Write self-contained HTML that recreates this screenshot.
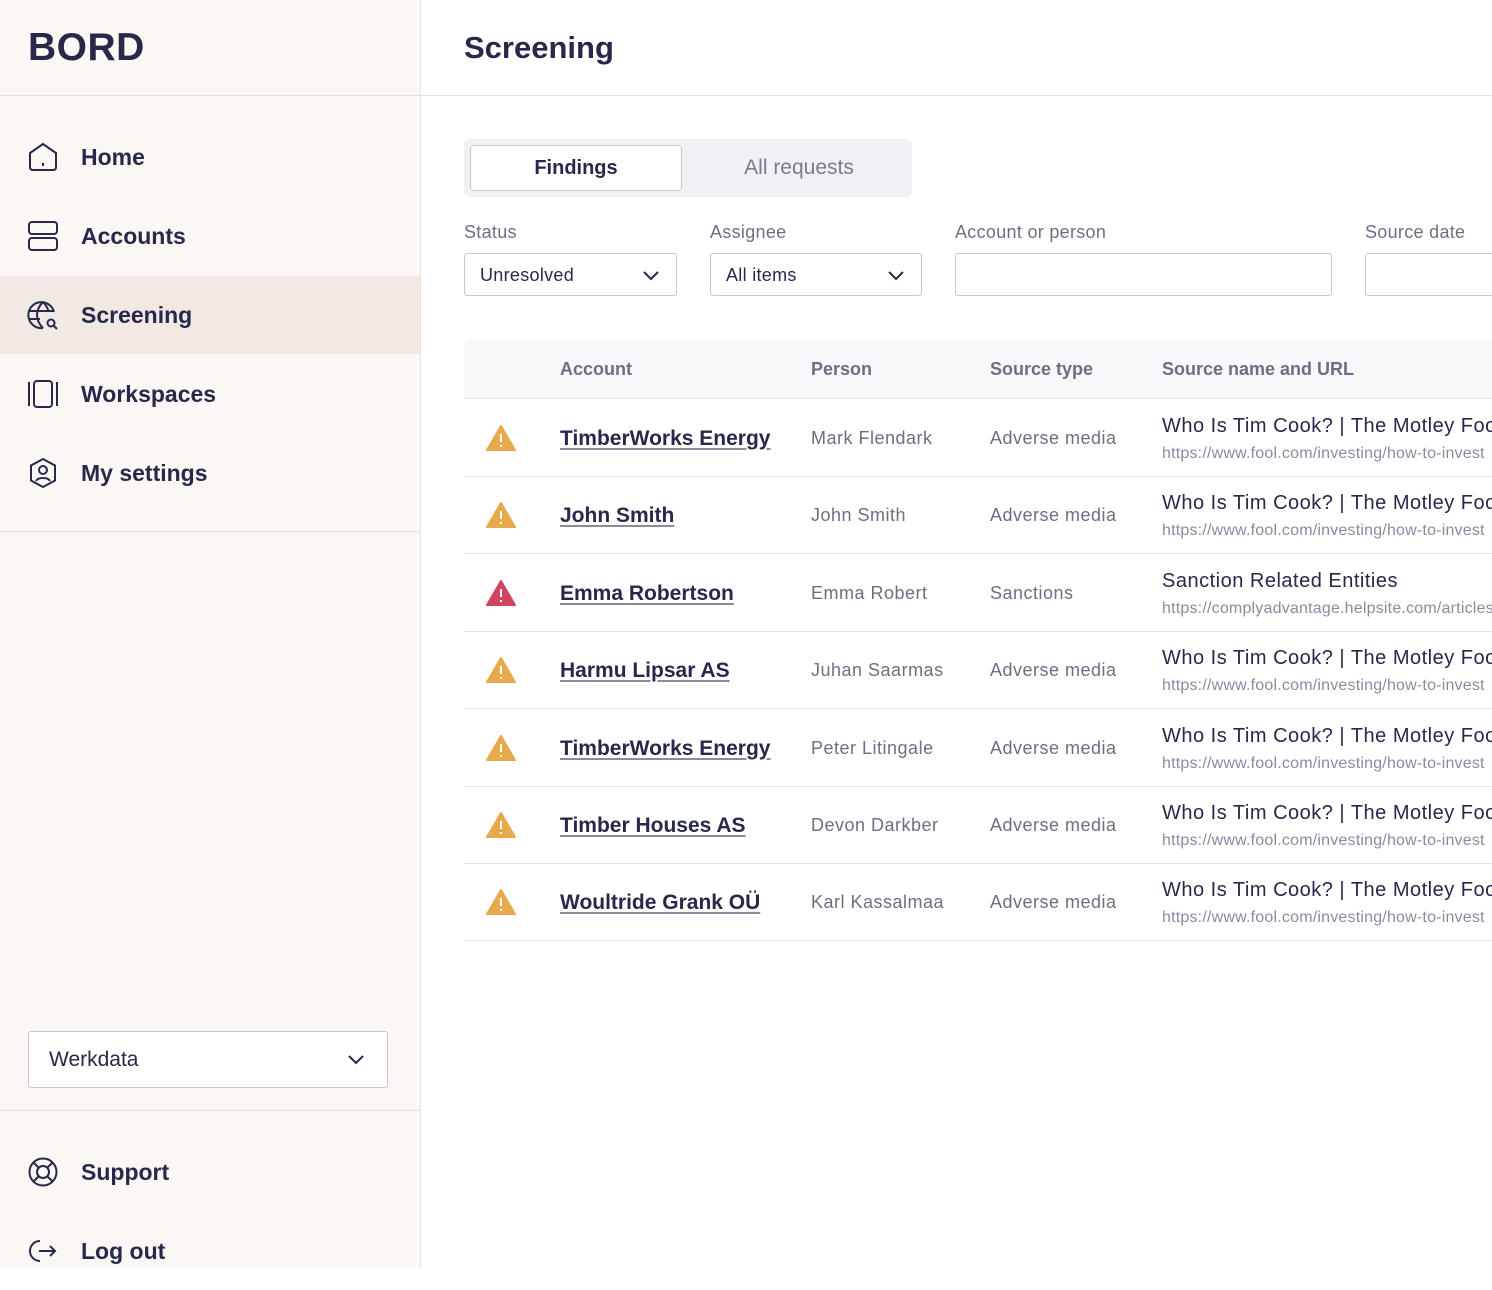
<!DOCTYPE html>
<html><head><meta charset="utf-8"><style>
*{margin:0;padding:0;box-sizing:border-box}
body{width:1492px;height:1268px;overflow:hidden;font-family:"Liberation Sans",sans-serif;color:#27284a;background:#fff;position:relative}
.sb{position:absolute;left:0;top:0;width:421px;height:1268px;background:#faf7f5;border-right:1px solid #e6e2e0}
.logo{position:absolute;left:28px;top:26px;font-size:39px;font-weight:bold;letter-spacing:0.5px}
.hl{position:absolute;left:0;width:420px;height:1px;background:#e6e2e0}
.nav{position:absolute;left:0;width:420px;height:78px;display:flex;align-items:center;font-size:23px;font-weight:bold}
.nav svg{position:absolute;left:27px}
.nav span{position:absolute;left:81px}
.act{background:#f1e9e4}
.sel{position:absolute;left:28px;top:1031px;width:360px;height:57px;border:1px solid #c9c7cf;border-radius:3px;background:#fff;font-size:21px;padding:16px 20px}
h1{position:absolute;left:464px;top:30px;font-size:31px;font-weight:bold}
.tabs{position:absolute;left:464px;top:139px;width:448px;height:58px;background:#f1f1f5;border-radius:6px}
.tab1{position:absolute;left:6px;top:6px;width:212px;height:46px;background:#fff;border:1px solid #c9c7cf;border-radius:4px;text-align:center;line-height:44px;font-size:20px;font-weight:bold}
.tab2{position:absolute;left:240px;top:6px;width:190px;line-height:46px;text-align:center;font-size:21px;color:#7a7a90}
.lbl{position:absolute;top:222px;font-size:18px;color:#6e6e82;letter-spacing:.3px}
.inp{position:absolute;top:253px;height:43px;border:1px solid #c9c7cf;border-radius:3px;background:#fff;font-size:18px;padding:11px 15px;letter-spacing:.3px}
.th{position:absolute;left:464px;top:340px;width:1028px;height:59px;background:#f8f8fa;border-bottom:1px solid #e3e3e8;border-radius:6px 0 0 0}
.th span{position:absolute;top:19px;font-size:18px;font-weight:bold;color:#6e6e82}
.row{position:absolute;left:464px;width:1028px;height:78px;border-bottom:1px solid #e3e3e8}
.row svg{position:absolute;left:22px;top:26px}
.acc{position:absolute;left:96px;top:28px;font-size:21px;font-weight:bold;text-decoration:underline;text-decoration-color:#8a8aa0;text-underline-offset:3px;white-space:nowrap}
.per{position:absolute;left:347px;top:29px;font-size:18px;color:#6e6e82;letter-spacing:.5px}
.st{position:absolute;left:526px;top:29px;font-size:18px;color:#6e6e82;letter-spacing:.5px}
.sn{position:absolute;left:698px;top:16px;font-size:20px;white-space:nowrap;letter-spacing:.5px}
.su{position:absolute;left:698px;top:46px;font-size:16px;color:#8a8aa0;white-space:nowrap;letter-spacing:.2px}
</style></head><body>
<div class="sb">
<div class="logo">BORD</div>
<div class="hl" style="top:95px"></div>
<div class="nav" style="top:118px"><svg width="32" height="32" viewBox="0 0 32 32" fill="none" stroke="#27284a" stroke-width="2"><path d="M3 12 L16 3 L29 12 V26 Q29 29 26 29 H6 Q3 29 3 26Z"/><path d="M16 22v3"/></svg><span>Home</span></div>
<div class="nav" style="top:197px"><svg width="32" height="32" viewBox="0 0 32 32" fill="none" stroke="#27284a" stroke-width="2"><rect x="2" y="2" width="28" height="12" rx="3"/><rect x="2" y="18" width="28" height="12" rx="3"/></svg><span>Accounts</span></div>
<div class="nav act" style="top:276px"><svg width="32" height="32" viewBox="0 0 32 32" fill="none" stroke="#27284a" stroke-width="2"><path d="M27 13A13 13 0 1 0 16 29"/><path d="M16 3c-4 4-6 8-6 13s2 9 6 13M16 3c3 3 5 6 5.5 10"/><path d="M3 12h24M3 20h10"/><circle cx="24" cy="24" r="3.5"/><path d="M26.5 26.5L30 30"/></svg><span>Screening</span></div>
<div class="nav" style="top:355px"><svg width="32" height="32" viewBox="0 0 32 32" fill="none" stroke="#27284a" stroke-width="2"><rect x="7" y="3" width="18" height="26" rx="3"/><path d="M2 4v24M30 4v24"/></svg><span>Workspaces</span></div>
<div class="nav" style="top:434px"><svg width="32" height="32" viewBox="0 0 32 32" fill="none" stroke="#27284a" stroke-width="2"><path d="M16 2L28 8.5V23.5L16 30L4 23.5V8.5Z"/><circle cx="16" cy="13" r="4"/><path d="M9 24c2-4 12-4 14 0"/></svg><span>My settings</span></div>
<div class="hl" style="top:531px"></div>
<div class="sel">Werkdata<svg style="position:absolute;right:22px;top:22px" width="18" height="12" viewBox="0 0 18 12" fill="none" stroke="#27284a" stroke-width="2"><path d="M2 2l7 7 7-7"/></svg></div>
<div class="hl" style="top:1110px"></div>
<div class="nav" style="top:1133px"><svg width="32" height="32" viewBox="0 0 32 32" fill="none" stroke="#27284a" stroke-width="2"><circle cx="16" cy="16" r="13.5"/><circle cx="16" cy="16" r="6"/><path d="M7 7l5 5M25 7l-5 5M7 25l5-5M25 25l-5-5"/></svg><span>Support</span></div>
<div class="nav" style="top:1212px"><svg width="32" height="32" viewBox="0 0 32 32" fill="none" stroke="#27284a" stroke-width="2"><path d="M13 6A10 10 0 1 0 13 26"/><path d="M12 16h16M23 11l5 5-5 5"/></svg><span>Log out</span></div>
</div>
<h1>Screening</h1>
<div class="hl" style="left:421px;width:1071px;top:95px"></div>
<div class="tabs"><div class="tab1">Findings</div><div class="tab2">All requests</div></div>
<div class="lbl" style="left:464px">Status</div>
<div class="lbl" style="left:710px">Assignee</div>
<div class="lbl" style="left:955px">Account or person</div>
<div class="lbl" style="left:1365px">Source date</div>
<div class="inp" style="left:464px;width:213px">Unresolved<svg style="position:absolute;right:16px;top:16px" width="18" height="12" viewBox="0 0 18 12" fill="none" stroke="#27284a" stroke-width="2"><path d="M2 2l7 7 7-7"/></svg></div>
<div class="inp" style="left:710px;width:212px">All items<svg style="position:absolute;right:16px;top:16px" width="18" height="12" viewBox="0 0 18 12" fill="none" stroke="#27284a" stroke-width="2"><path d="M2 2l7 7 7-7"/></svg></div>
<div class="inp" style="left:955px;width:377px"></div>
<div class="inp" style="left:1365px;width:140px"></div>
<div class="th"><span style="left:96px">Account</span><span style="left:347px">Person</span><span style="left:526px">Source type</span><span style="left:698px">Source name and URL</span></div>

<div class="row" style="top:399px"><svg width="30" height="26" viewBox="0 0 30 26"><path d="M15 1L29 25H1Z" fill="#e8a94c" stroke="#e8a94c" stroke-width="2" stroke-linejoin="round"/><path d="M15 9v8M15 20v2" stroke="#fff" stroke-width="2"/></svg><div class="acc">TimberWorks Energy</div><div class="per">Mark Flendark</div><div class="st">Adverse media</div><div class="sn">Who Is Tim Cook? | The Motley Fool</div><div class="su">https://www.fool.com/investing/how-to-invest</div></div>
<div class="row" style="top:476px"><svg width="30" height="26" viewBox="0 0 30 26"><path d="M15 1L29 25H1Z" fill="#e8a94c" stroke="#e8a94c" stroke-width="2" stroke-linejoin="round"/><path d="M15 9v8M15 20v2" stroke="#fff" stroke-width="2"/></svg><div class="acc">John Smith</div><div class="per">John Smith</div><div class="st">Adverse media</div><div class="sn">Who Is Tim Cook? | The Motley Fool</div><div class="su">https://www.fool.com/investing/how-to-invest</div></div>
<div class="row" style="top:554px"><svg width="30" height="26" viewBox="0 0 30 26"><path d="M15 1L29 25H1Z" fill="#d2455f" stroke="#d2455f" stroke-width="2" stroke-linejoin="round"/><path d="M15 9v8M15 20v2" stroke="#fff" stroke-width="2"/></svg><div class="acc">Emma Robertson</div><div class="per">Emma Robert</div><div class="st">Sanctions</div><div class="sn">Sanction Related Entities</div><div class="su">https://complyadvantage.helpsite.com/articles</div></div>
<div class="row" style="top:631px"><svg width="30" height="26" viewBox="0 0 30 26"><path d="M15 1L29 25H1Z" fill="#e8a94c" stroke="#e8a94c" stroke-width="2" stroke-linejoin="round"/><path d="M15 9v8M15 20v2" stroke="#fff" stroke-width="2"/></svg><div class="acc">Harmu Lipsar AS</div><div class="per">Juhan Saarmas</div><div class="st">Adverse media</div><div class="sn">Who Is Tim Cook? | The Motley Fool</div><div class="su">https://www.fool.com/investing/how-to-invest</div></div>
<div class="row" style="top:709px"><svg width="30" height="26" viewBox="0 0 30 26"><path d="M15 1L29 25H1Z" fill="#e8a94c" stroke="#e8a94c" stroke-width="2" stroke-linejoin="round"/><path d="M15 9v8M15 20v2" stroke="#fff" stroke-width="2"/></svg><div class="acc">TimberWorks Energy</div><div class="per">Peter Litingale</div><div class="st">Adverse media</div><div class="sn">Who Is Tim Cook? | The Motley Fool</div><div class="su">https://www.fool.com/investing/how-to-invest</div></div>
<div class="row" style="top:786px"><svg width="30" height="26" viewBox="0 0 30 26"><path d="M15 1L29 25H1Z" fill="#e8a94c" stroke="#e8a94c" stroke-width="2" stroke-linejoin="round"/><path d="M15 9v8M15 20v2" stroke="#fff" stroke-width="2"/></svg><div class="acc">Timber Houses AS</div><div class="per">Devon Darkber</div><div class="st">Adverse media</div><div class="sn">Who Is Tim Cook? | The Motley Fool</div><div class="su">https://www.fool.com/investing/how-to-invest</div></div>
<div class="row" style="top:863px"><svg width="30" height="26" viewBox="0 0 30 26"><path d="M15 1L29 25H1Z" fill="#e8a94c" stroke="#e8a94c" stroke-width="2" stroke-linejoin="round"/><path d="M15 9v8M15 20v2" stroke="#fff" stroke-width="2"/></svg><div class="acc">Woultride Grank OÜ</div><div class="per">Karl Kassalmaa</div><div class="st">Adverse media</div><div class="sn">Who Is Tim Cook? | The Motley Fool</div><div class="su">https://www.fool.com/investing/how-to-invest</div></div>
</body></html>
